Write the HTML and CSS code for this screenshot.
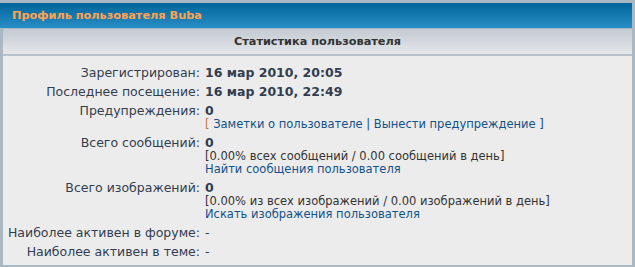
FILE: index.html
```html
<!DOCTYPE html>
<html lang="ru">
<head>
    <meta charset="UTF-8">
    <title>Профиль пользователя Buba</title>
    <link rel="stylesheet" href="styles.css">
</head>
<body>
    <div class="tablebg">
        <div class="cat-head">Профиль пользователя Buba</div>
        <div class="sub-head">Статистика пользователя</div>
        <div class="stats">
            <div class="row">
                <div class="label">Зарегистрирован:</div>
                <div class="value"><b>16 мар 2010, 20:05</b></div>
            </div>
            <div class="row">
                <div class="label">Последнее посещение:</div>
                <div class="value"><b>16 мар 2010, 22:49</b></div>
            </div>
            <div class="row">
                <div class="label">Предупреждения:</div>
                <div class="value">
                    <b>0</b>
                    <div class="small"><span class="bracket">[</span> <a href="#">Заметки о пользователе</a> | <a href="#">Вынести предупреждение</a> ]</div>
                </div>
            </div>
            <div class="row">
                <div class="label">Всего сообщений:</div>
                <div class="value">
                    <b>0</b>
                    <div class="small plain">[0.00% всех сообщений / 0.00 сообщений в день]</div>
                    <div class="small"><a href="#">Найти сообщения пользователя</a></div>
                </div>
            </div>
            <div class="row">
                <div class="label">Всего изображений:</div>
                <div class="value">
                    <b>0</b>
                    <div class="small plain">[0.00% из всех изображений / 0.00 изображений в день]</div>
                    <div class="small"><a href="#">Искать изображения пользователя</a></div>
                </div>
            </div>
            <div class="row">
                <div class="label">Наиболее активен в форуме:</div>
                <div class="value">-</div>
            </div>
            <div class="row">
                <div class="label">Наиболее активен в теме:</div>
                <div class="value">-</div>
            </div>
        </div>
    </div>
</body>
</html>
```

FILE: styles.css
```css
body {
    margin: 0;
    font-family: Verdana, "DejaVu Sans", sans-serif;
    background-color: #ececec;
    color: #323d4f;
}
.tablebg {
    width: 632px;
    background-color: #a9b8c2;
    padding: 3px 3px 3px 0;
}
.cat-head {
    height: 25px;
    line-height: 25px;
    padding-left: 12px;
    font-size: 11.3px;
    font-weight: bold;
    color: #ffa34f;
    background: linear-gradient(#00659a, #2a8ec6);
}
.sub-head {
    margin: 1px 0 0 3px;
    height: 25px;
    line-height: 25px;
    text-align: center;
    font-size: 11.3px;
    font-weight: bold;
    color: #333;
    background: linear-gradient(#c4cad2, #e4e6ea);
    border-bottom: 2px solid #b9c2ca;
}
.stats {
    margin-left: 3px;
    background-color: #ececec;
    padding: 8px 0 3px;
}
.row {
    display: flex;
    gap: 5px;
    padding: 2px 0 3px;
    font-size: 12.5px;
    line-height: 14px;
}
.label {
    width: 197px;
    flex-shrink: 0;
    text-align: right;
}
.value b {
    color: #323d4f;
}
.small {
    font-size: 11.5px;
    line-height: 13px;
    color: #105289;
}
.small a {
    color: #105289;
    text-decoration: none;
}
.small.plain {
    color: #333;
}
.bracket {
    color: #bc7a3a;
}
```
